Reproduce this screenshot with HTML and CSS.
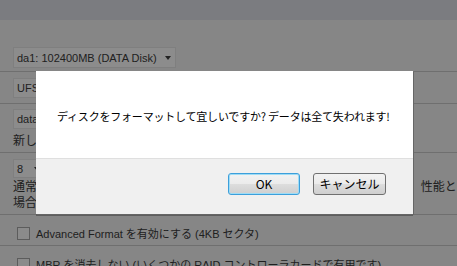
FILE: index.html
```html
<!DOCTYPE html>
<html lang="ja">
<head>
  <meta charset="UTF-8" />
  <meta name="viewport" content="width=device-width, initial-scale=1.0"/>
  <title>ディスクのフォーマット</title>
  <link rel="stylesheet" href="styles.css">
</head>
<body>
  <div class="header"></div>

  <div class="row row-disk">
    <div class="fake-select select-disk">da1: 102400MB (DATA Disk) <span class="arrow"></span></div>
  </div>

  <div class="row row-fs">
    <div class="fake-select select-fs">UFS <span class="arrow"></span></div>
  </div>

  <div class="row row-label">
    <div class="fake-input">data</div>
    <p class="desc">新しいボリュームのラベルを入力します。</p>
  </div>

  <div class="row row-block">
    <div class="fake-select select-block">8 <span class="arrow"></span></div>
    <p class="desc">通常は変更する必要はありません。大きなファイルを多く保存する場合は、性能とコ</p>
    <p class="desc">場合によっては値を小さくしてください。</p>
  </div>

  <div class="row row-check">
    <label class="check"><span class="box"></span>Advanced Format を有効にする (4KB セクタ)</label>
  </div>

  <div class="row row-check">
    <label class="check"><span class="box"></span>MBR を消去しない (いくつかの RAID コントローラカードで有用です)</label>
  </div>

  <div class="dialog">
    <div class="dialog-body">ディスクをフォーマットして宜しいですか? データは全て失われます!</div>
    <div class="dialog-footer">
      <button class="btn btn-ok">OK</button>
      <button class="btn">キャンセル</button>
    </div>
  </div>
</body>
</html>
```

FILE: styles.css
```css
body {
  font-family: "Liberation Sans", "Noto Sans CJK JP", sans-serif;
  font-size: 11px;
  color: #202020;
  background-color: #868686;
  margin: 0;
  padding: 0;
  width: 457px;
  height: 266px;
  overflow: hidden;
  position: relative;
}
.header {
  height: 20px;
  background-color: #7b7c80;
}
.row {
  border-bottom: 1px solid #6f6f6f;
  padding-left: 13px;
  box-sizing: border-box;
  overflow: hidden;
}
.row-disk {
  height: 52px;
  padding-top: 27px;
}
.row-fs {
  height: 32px;
  padding-top: 6px;
}
.row-label {
  height: 49px;
  padding-top: 5px;
}
.row-block {
  height: 62px;
  padding-top: 6px;
}
.row-check {
  height: 31px;
  padding-top: 10px;
  padding-left: 17px;
}
.fake-select, .fake-input {
  display: flex;
  align-items: center;
  gap: 8px;
  box-sizing: border-box;
  background-color: #8c8c8c;
  border: 1px solid #7f7f7f;
  padding: 0 3px;
  white-space: nowrap;
}
.select-disk {
  width: 163px;
  height: 21px;
  padding-right: 8px;
}
.select-fs {
  height: 20px;
  width: 40px;
}
.fake-input {
  width: 60px;
  height: 20px;
}
.select-block {
  height: 19px;
  width: 28px;
  padding-right: 0;
}
.arrow {
  margin-left: auto;
  width: 0;
  height: 0;
  border-left: 3px solid transparent;
  border-right: 3px solid transparent;
  border-top: 4px solid #222;
  flex: none;
}
.desc {
  margin: 0;
  font-family: "Noto Sans CJK JP", sans-serif;
  font-size: 12px;
  line-height: 16px;
  white-space: nowrap;
}
.row-label .desc {
  margin-top: 3px;
}
.check {
  display: flex;
  align-items: center;
  gap: 6px;
  white-space: nowrap;
}
.box {
  width: 11px;
  height: 11px;
  border: 1px solid #5c5c5c;
  background-color: #8b8b8b;
  flex: none;
}

/* 確認ダイアログ */
.dialog {
  position: absolute;
  left: 36px;
  top: 71px;
  width: 377px;
  height: 143px;
  display: flex;
  flex-direction: column;
  box-shadow: 1px 1px 0 #666, 0 2px 0 #5e5e5e;
  font-family: "Noto Sans CJK JP", sans-serif;
}
.dialog-body {
  height: 87px;
  background-color: #fff;
  color: #000;
  font-size: 11px;
  letter-spacing: -0.2px;
  padding-left: 21px;
  display: flex;
  align-items: center;
  padding-top: 2px;
  box-sizing: border-box;
  white-space: nowrap;
}
.dialog-footer {
  flex: 1;
  background-color: #f0f0f0;
  border-top: 1px solid #dfdfdf;
  display: flex;
  justify-content: flex-end;
  gap: 13px;
  padding: 14px 27px 0 0;
  align-items: flex-start;
}
.btn {
  width: 73px;
  height: 22px;
  font-family: "Noto Sans CJK JP", sans-serif;
  font-size: 12px;
  color: #000;
  border: 1px solid #707070;
  border-radius: 3px;
  background: linear-gradient(#f2f2f2 0%, #ebebeb 50%, #dddddd 51%, #cfcfcf 100%);
  padding: 0;
  line-height: 18px;
}
.btn-ok {
  width: 72px;
  border-color: #3c9fdb;
  box-shadow: inset 0 0 0 1px #9fdcf5;
}
```
